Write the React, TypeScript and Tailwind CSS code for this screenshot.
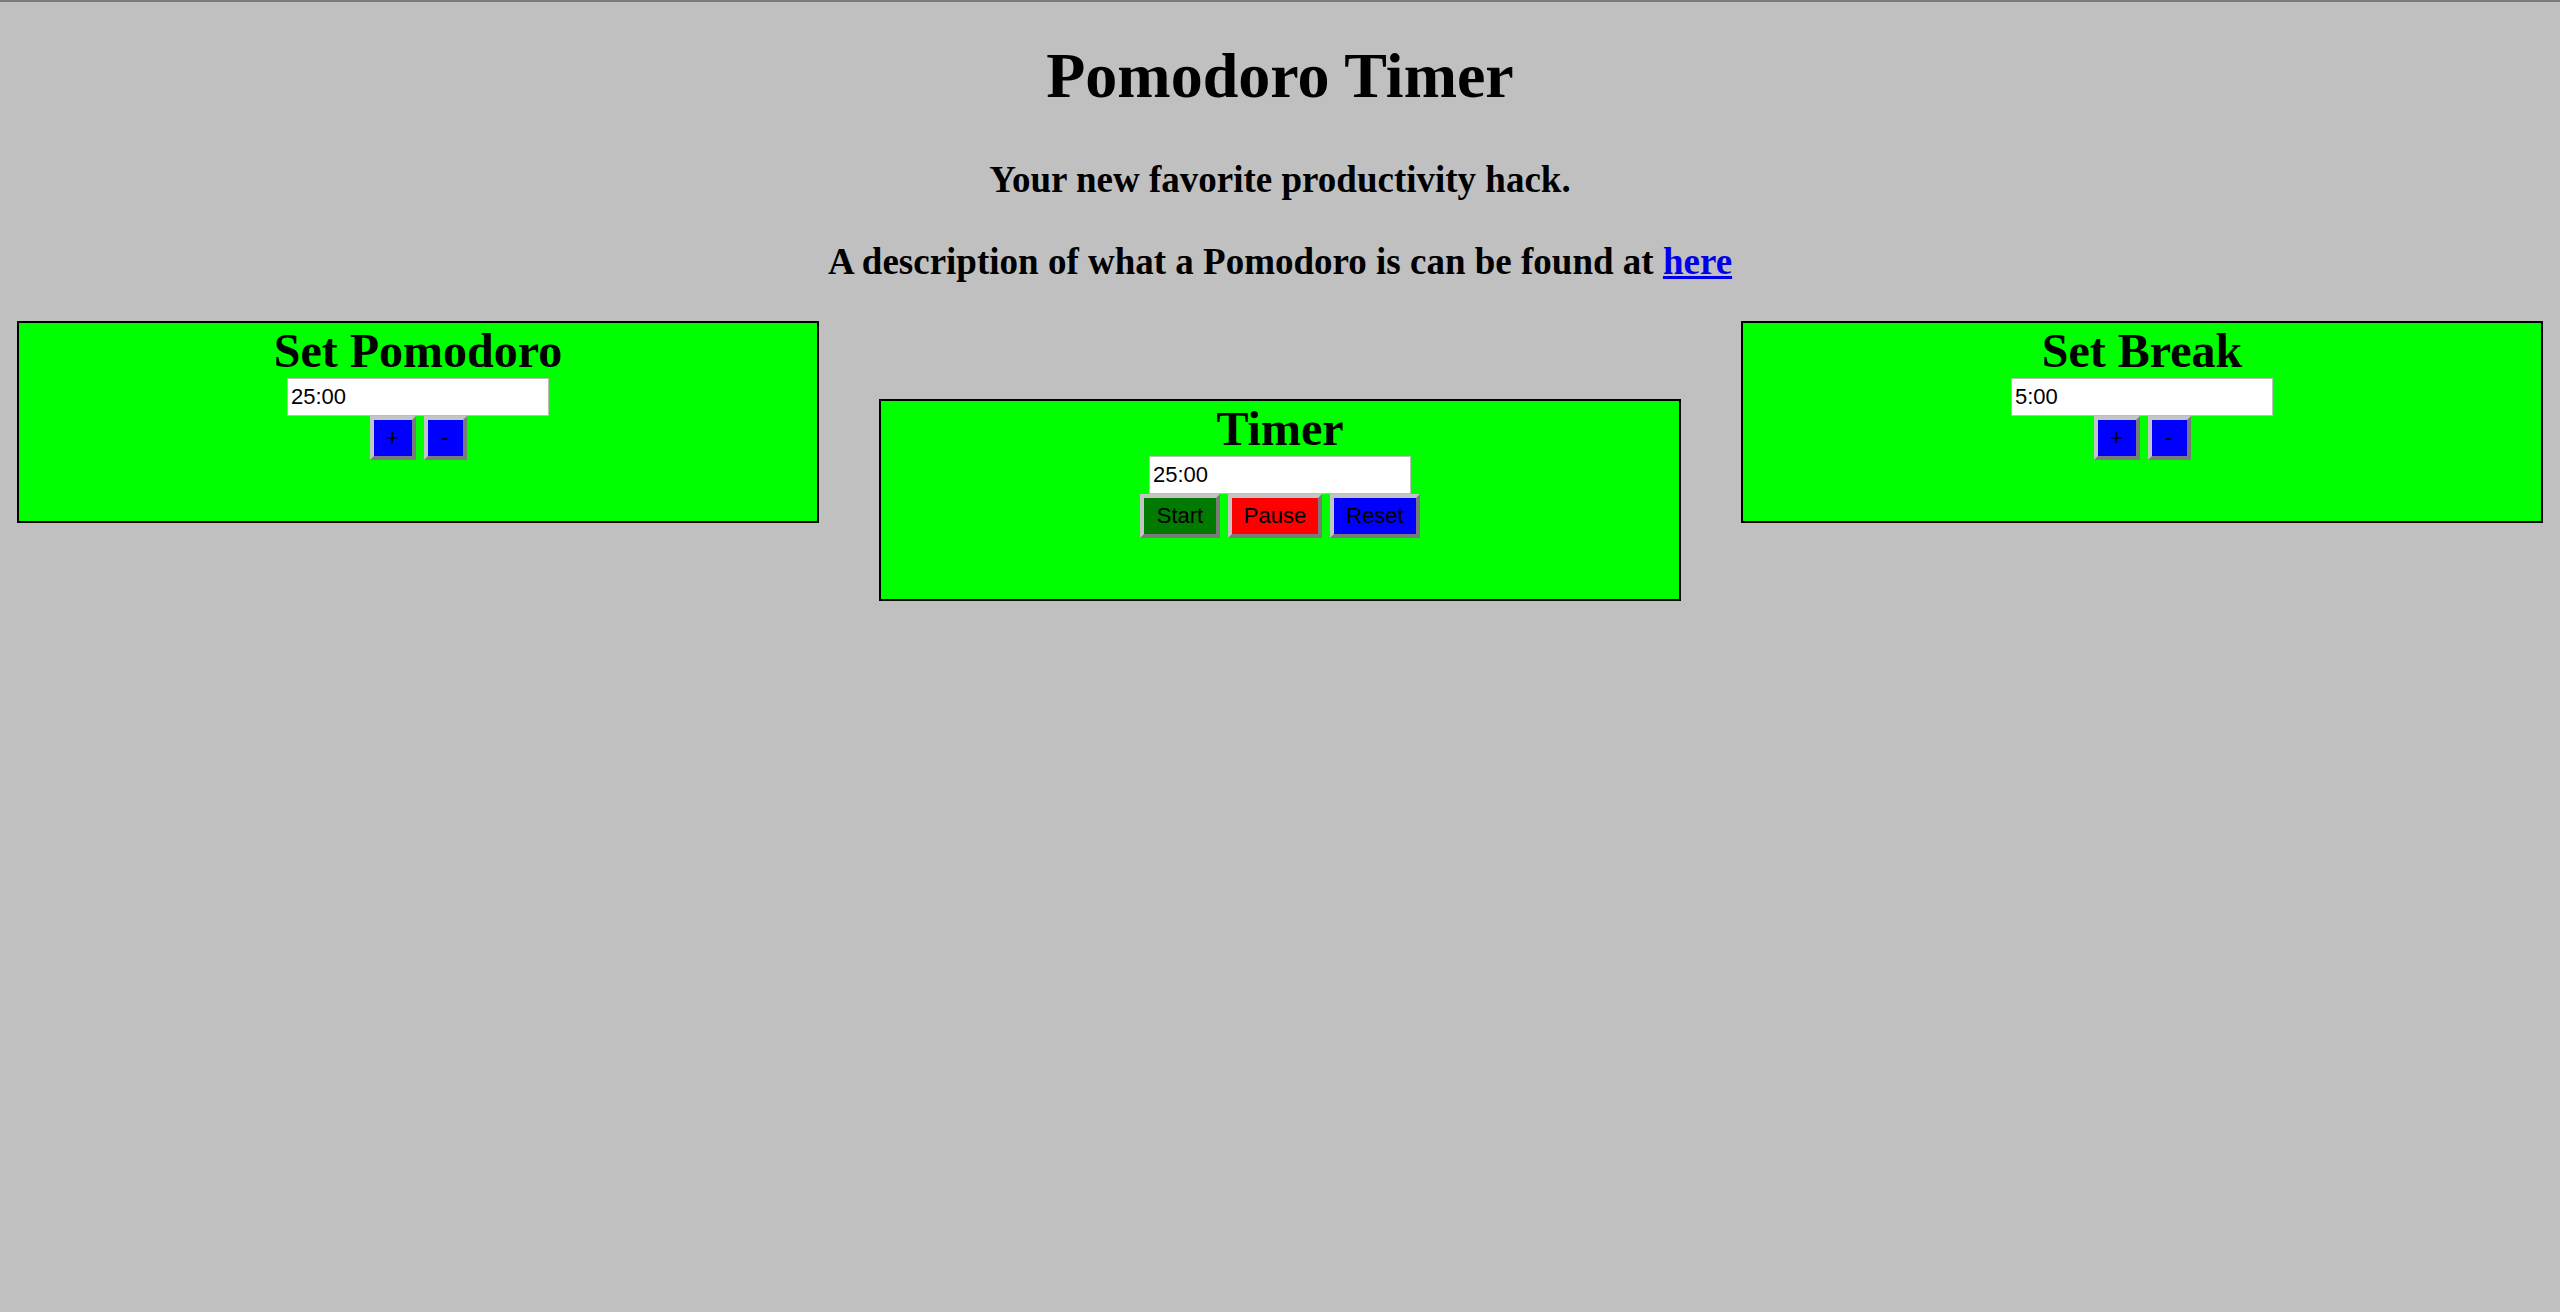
import React, { useState } from "react";

const serif = "font-['Liberation_Serif','Times_New_Roman',serif]";
const sans = "font-['Liberation_Sans',Arial,sans-serif]";

function Btn({ label, bg, w, onClick }: { label: string; bg: string; w: string; onClick?: () => void }) {
  return (
    <button
      onClick={onClick}
      className={`${sans} ${bg} ${w} h-[44px] border-4 border-t-[#c4c4c4] border-l-[#c4c4c4] border-b-[#7a7a7a] border-r-[#7a7a7a] text-[22px] leading-none text-black flex items-center justify-center`}
    >
      {label}
    </button>
  );
}

function Panel({ title, value, children, extra }: { title: string; value: string; children: React.ReactNode; extra?: string }) {
  return (
    <div className={`w-[802px] h-[202px] border-2 border-black bg-[#00ff00] flex flex-col items-center ${extra ?? ""}`}>
      <h2 className={`${serif} text-[48px] leading-[55px] font-bold text-black`}>{title}</h2>
      <input
        readOnly
        value={value}
        className={`${sans} w-[262px] h-[38px] bg-white border border-[#bdbdbd] pl-[3px] text-[22px] text-black outline-none`}
      />
      <div className="flex gap-2">{children}</div>
    </div>
  );
}

export default function App() {
  const [work] = useState("25:00");
  const [rest] = useState("5:00");

  return (
    <div className="min-h-screen bg-[#c0c0c0] border-t-2 border-[#7c7c7c] text-black">
      <h1 className={`${serif} mt-[37px] text-center text-[64px] leading-[74px] font-bold`}>Pomodoro Timer</h1>
      <h3 className={`${serif} mt-[46px] text-center text-[37px] leading-[41px] font-bold`}>
        Your new favorite productivity hack.
      </h3>
      <h3 className={`${serif} mt-[41px] text-center text-[37px] leading-[41px] font-bold`}>
        A description of what a Pomodoro is can be found at{" "}
        <a href="#" className="text-[#0000ee] underline">here</a>
      </h3>

      <div className="mt-[39px] px-[17px] flex justify-between items-start">
        <Panel title="Set Pomodoro" value={work}>
          <Btn label="+" bg="bg-[#0000ff]" w="w-[46px]" />
          <Btn label="-" bg="bg-[#0000ff]" w="w-[43px]" />
        </Panel>

        <Panel title="Timer" value={work} extra="mt-[78px]">
          <Btn label="Start" bg="bg-[#007a00]" w="w-[80px]" />
          <Btn label="Pause" bg="bg-[#ff0000]" w="w-[94px]" />
          <Btn label="Reset" bg="bg-[#0000ff]" w="w-[90px]" />
        </Panel>

        <Panel title="Set Break" value={rest}>
          <Btn label="+" bg="bg-[#0000ff]" w="w-[46px]" />
          <Btn label="-" bg="bg-[#0000ff]" w="w-[43px]" />
        </Panel>
      </div>
    </div>
  );
}
